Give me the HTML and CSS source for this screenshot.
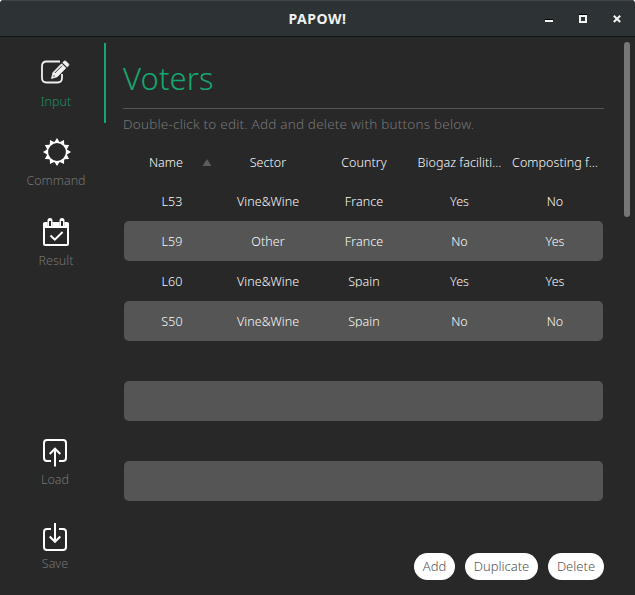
FILE: index.html
```
<!DOCTYPE html>
<html lang="en">
<head>
<meta charset="utf-8">
<title>PAPOW!</title>
<link rel="stylesheet" href="styles.css">
</head>
<body>
<div class="window">
  <header class="titlebar">
    <h1 class="title">PAPOW!</h1>
    <div class="controls">
      <svg width="8" height="9" viewBox="0 0 8 9"><path d="M0 5h8v1H0z" fill="#000"/><path d="M0 6h8v2H0z" fill="#f3f3f3"/></svg>
      <svg width="8" height="9" viewBox="0 0 8 9"><path d="M0 0h8v1H0z" fill="#000"/><path d="M1 2h6v6H1z" fill="none" stroke="#f3f3f3" stroke-width="2"/></svg>
      <svg width="8" height="9" viewBox="0 0 8 9"><path d="M0.8 1.8 7.2 8M7.2 1.8 0.8 8" fill="none" stroke="#f3f3f3" stroke-width="2"/></svg>
    </div>
  </header>
  <div class="body">
    <nav class="sidebar">
      <div class="item active">
        <svg width="30" height="28" viewBox="0 0 30 28" fill="none" stroke="#f0f0f0">
          <path d="M20 3.500H6.500Q2 3.500 2 8v12Q2 24.500 6.500 24.500h11Q22 24.500 22 20V16" stroke-width="1.800"/>
          <path d="M11.500 20.500l1.500-6L21.500 5.800l4.300 4.300-8.500 8.600z" fill="#f0f0f0" stroke-width=".8" stroke-linejoin="round"/>
          <path d="M14.800 15 22 7.800M13.300 18h1.500" stroke="#282828" stroke-width=".9"/>
          <path d="M22.700 4.600 24 3.300q1-1 2 0l2.500 2.500q1 1 0 2l-1.300 1.300z" fill="#f0f0f0" stroke-width=".6"/>
        </svg>
        <span class="label">Input</span>
      </div>
      <div class="item command">
        <svg width="30" height="28" viewBox="0 0 30 28">
          <g fill="#fff">
            <path id="tooth" d="M12.300 4.300 15 0l2.700 4.300z"/>
            <use href="#tooth" transform="rotate(30 15 14)"/><use href="#tooth" transform="rotate(60 15 14)"/>
            <use href="#tooth" transform="rotate(90 15 14)"/><use href="#tooth" transform="rotate(120 15 14)"/>
            <use href="#tooth" transform="rotate(150 15 14)"/><use href="#tooth" transform="rotate(180 15 14)"/>
            <use href="#tooth" transform="rotate(210 15 14)"/><use href="#tooth" transform="rotate(240 15 14)"/>
            <use href="#tooth" transform="rotate(270 15 14)"/><use href="#tooth" transform="rotate(300 15 14)"/>
            <use href="#tooth" transform="rotate(330 15 14)"/>
          </g>
          <circle cx="15" cy="14" r="9.700" fill="none" stroke="#fff" stroke-width="1.600"/>
        </svg>
        <span class="label">Command</span>
      </div>
      <div class="item">
        <svg width="30" height="28" viewBox="0 0 30 28" fill="none" stroke="#fff">
          <path d="M3 6h24v20a1 1 0 0 1-1 1H4a1 1 0 0 1-1-1z" stroke-width="2"/>
          <path d="M2 6q0-2 2-2h22q2 0 2 2v4H2z" fill="#fff" stroke="none"/>
          <path d="M6.500 3v5M11.500 3v5M18.500 3v5M23.500 3v5" stroke="#282828" stroke-opacity=".35"/>
          <path d="M9 7V2.500M21 7V2.500" stroke-width="5" stroke-linecap="round"/>
          <path d="M9 8V3M21 8V3" stroke="#282828" stroke-width="2"/>
          <path d="m9.500 17.500 4.300 4.200 7.800-7.700" stroke-width="2"/>
        </svg>
        <span class="label">Result</span>
      </div>
      <div class="item load">
        <svg width="30" height="28" viewBox="0 0 30 28" fill="none" stroke="#fff" stroke-width="2">
          <path d="M10 22H6q-3 0-3-3V4q0-3 3-3h16q3 0 3 3v15q0 3-3 3h-4"/>
          <path d="M14 27.500V10M8.700 15 14 9.700l5.300 5.300"/>
        </svg>
        <span class="label">Load</span>
      </div>
      <div class="item save">
        <svg width="30" height="28" viewBox="0 0 30 28" fill="none" stroke="#fff" stroke-width="2">
          <path d="M10 6H6Q3 6 3 9v15q0 3 3 3h16q3 0 3-3V9q0-3-3-3h-4"/>
          <path d="M14 0v18.500M8.700 13.500l5.300 5.300 5.300-5.300"/>
        </svg>
        <span class="label">Save</span>
      </div>
    </nav>
    <main class="main">
      <h2 class="heading">Voters</h2>
      <p class="hint">Double-click to edit. Add and delete with buttons below.</p>
      <div class="table">
        <div class="row head">
          <span class="name">Name<svg class="sort" width="10" height="7" viewBox="0 0 10 7"><path d="M.5 7 5 0l4.500 7z" fill="#5c5c5c"/></svg></span>
          <span>Sector</span><span>Country</span><span>Biogaz faciliti…</span><span>Composting f…</span>
        </div>
        <div class="row"><span>L53</span><span>Vine&amp;Wine</span><span>France</span><span>Yes</span><span>No</span></div>
        <div class="row alt"><span>L59</span><span>Other</span><span>France</span><span>No</span><span>Yes</span></div>
        <div class="row"><span>L60</span><span>Vine&amp;Wine</span><span class="clip">Spain</span><span>Yes</span><span>Yes</span></div>
        <div class="row alt"><span>S50</span><span>Vine&amp;Wine</span><span class="clip">Spain</span><span>No</span><span>No</span></div>
        <div class="row"></div>
        <div class="row alt"></div>
        <div class="row"></div>
        <div class="row alt"></div>
      </div>
      <div class="actions">
        <button class="add">Add</button><button class="duplicate">Duplicate</button><button class="delete">Delete</button>
      </div>
    </main>
    <div class="track"><div class="thumb"></div></div>
  </div>
</div>
</body>
</html>
```
FILE: styles.css
```
* { box-sizing: border-box; }
body { margin: 0; background: #fff; font-family: "Noto Sans", "Open Sans", sans-serif; overflow: hidden; }
svg { display: block; flex: none; }
.window { width: 635px; height: 595px; display: flex; flex-direction: column; background: #282828; border-radius: 4px 4px 0 0; overflow: hidden; }
.titlebar { height: 37px; flex: none; display: grid; grid-template-columns: 1fr auto 1fr; align-items: center; background: #2d3234; border-top: 1px solid #414648; border-bottom: 1px solid #101314; }
.title { grid-column: 2; margin: 1px 0 0; font: 700 14px/18px "Noto Sans", sans-serif; color: #f0f0f0; letter-spacing: .5px; }
.controls { display: flex; justify-content: flex-end; gap: 26px; padding-right: 14px; margin-top: -1px; }
.body { flex: 1; display: flex; min-height: 0; }
.sidebar { width: 106px; flex: none; display: flex; flex-direction: column; padding-top: 6px; }
.item { height: 80px; flex: none; display: flex; flex-direction: column; align-items: center; padding: 15px 0 0 8px; border-right: 2px solid transparent; }
.active { border-color: #16a66f; }
.active .label { margin-top: 6px; color: #189260; }
.active svg { margin-right: 2px; }
.command svg { margin-right: -2px; }
.label { margin-top: 5px; font-size: 12.500px; line-height: 20px; font-weight: 300; color: #747474; white-space: nowrap; }
.item.load, .item.save { padding: 0 0 0 6px; }
.load .label, .save .label { margin-top: 3px; }
.load svg, .save svg { margin-right: -2px; }
.load { margin-top: 156px; }
.save { margin-top: 4px; }
.main { width: 481px; margin-left: 17px; flex: none; display: flex; flex-direction: column; padding-top: 16px; }
.heading { margin: 0; height: 56px; border-bottom: 1px solid #555; font-size: 31px; line-height: 50px; font-weight: 300; color: #16a66f; letter-spacing: .1px; }
.hint { margin: 5px 0 9px; font-size: 13.500px; line-height: 20px; font-weight: 300; letter-spacing: .2px; color: #767676; white-space: nowrap; }
.table { width: 479px; margin-left: 1px; }
.row { height: 40px; display: grid; grid-template-columns: 96px 96px 96px 95px 96px; align-items: center; text-align: center; border-radius: 5px; font-size: 12.500px; line-height: 17px; font-weight: 300; letter-spacing: .05px; color: #fafafa; white-space: nowrap; }
.head { height: 38px; }
.clip { clip-path: inset(0 0 2px); }
.name { position: relative; padding-right: 12px; }
.sort { position: absolute; left: 78px; top: 5px; }
.alt { background: #555; }
.actions { display: flex; justify-content: flex-end; gap: 10px; margin-top: 52px; }
button { height: 27px; padding: 0; border: 0; border-radius: 14px; background: #fff; color: #555; font: 300 13px/27px "Noto Sans", sans-serif; }
.add { width: 41px; }
.duplicate { width: 73px; }
.delete { width: 56px; }
.track { flex: 1; padding: 5px 5px 0 0; display: flex; justify-content: flex-end; }
.thumb { width: 6px; height: 175px; border-radius: 3px; background: #777; }
```
